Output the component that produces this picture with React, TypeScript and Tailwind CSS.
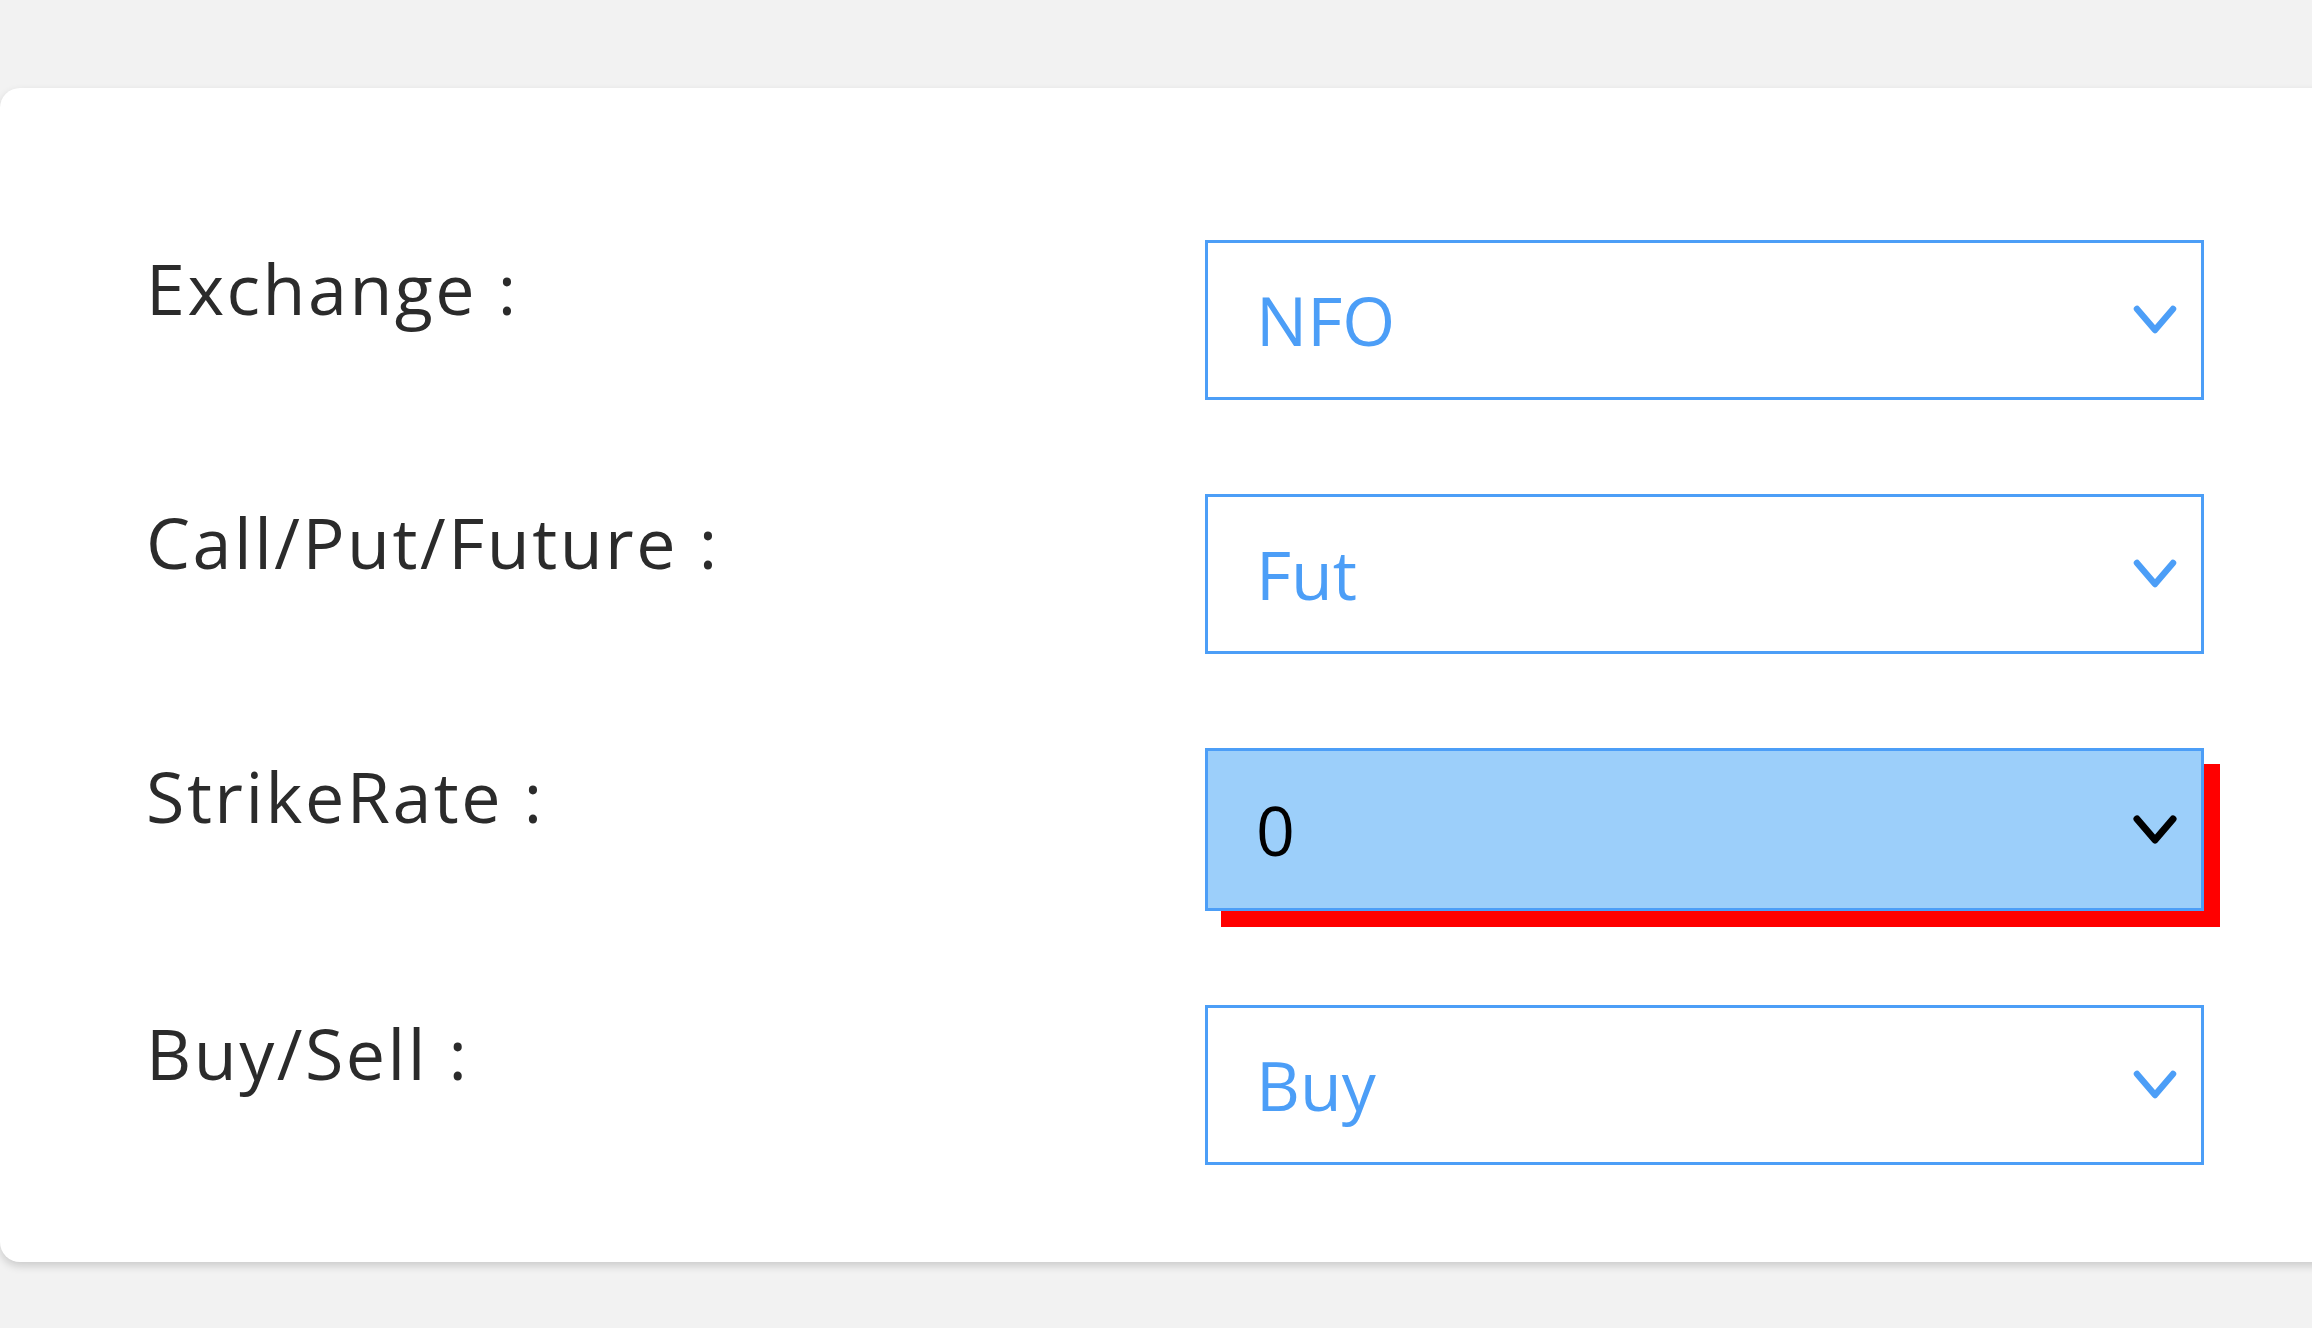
import React from "react";

interface Field {
  label: string;
  value: string;
  active?: boolean;
}

const fields: Field[] = [
  { label: "Exchange :", value: "NFO" },
  { label: "Call/Put/Future :", value: "Fut" },
  { label: "StrikeRate :", value: "0", active: true },
  { label: "Buy/Sell :", value: "Buy" },
];

const Chevron = ({ dark }: { dark?: boolean }) => (
  <svg
    width="48"
    height="36"
    viewBox="0 0 48 36"
    fill="none"
    className={dark ? "text-black" : "text-[#4c9ef7]"}
  >
    <path
      d="M6 7 L24 28 L42 7"
      stroke="currentColor"
      strokeWidth={dark ? 7 : 6.5}
      strokeLinecap="round"
      strokeLinejoin="round"
    />
  </svg>
);

const SelectBox = ({ value, active }: { value: string; active?: boolean }) => (
  <div
    className={
      active
        ? "flex h-[163px] w-[999px] items-center justify-between border-[3px] border-[#4c9ef7] bg-[#9ccffa] pl-[48px] pr-[22px] text-black shadow-[16px_16px_0_0_#ff0000]"
        : "flex h-[160px] w-[999px] items-center justify-between border-[3px] border-[#4c9ef7] bg-white pl-[48px] pr-[22px] text-[#4c9ef7]"
    }
  >
    <span className="text-[68px] leading-none font-['Open_Sans',sans-serif]">
      {value}
    </span>
    <Chevron dark={active} />
  </div>
);

export default function App() {
  return (
    <div className="h-[1328px] w-full overflow-hidden bg-[#f2f2f2] pt-[88px]">
      <div className="mr-[-60px] flex flex-col gap-[94px] rounded-[20px] bg-white pb-[97px] pl-[146px] pt-[152px] shadow-[0_4px_8px_rgba(0,0,0,0.16)]">
        {fields.map((f, i) => (
          <div key={i} className="flex items-start">
            <div className="w-[1059px] pt-[8px] text-[70px] leading-[80px] tracking-[2.5px] text-[#2b2b2b] font-['Open_Sans',sans-serif]">
              {f.label}
            </div>
            <SelectBox value={f.value} active={f.active} />
          </div>
        ))}
      </div>
    </div>
  );
}
